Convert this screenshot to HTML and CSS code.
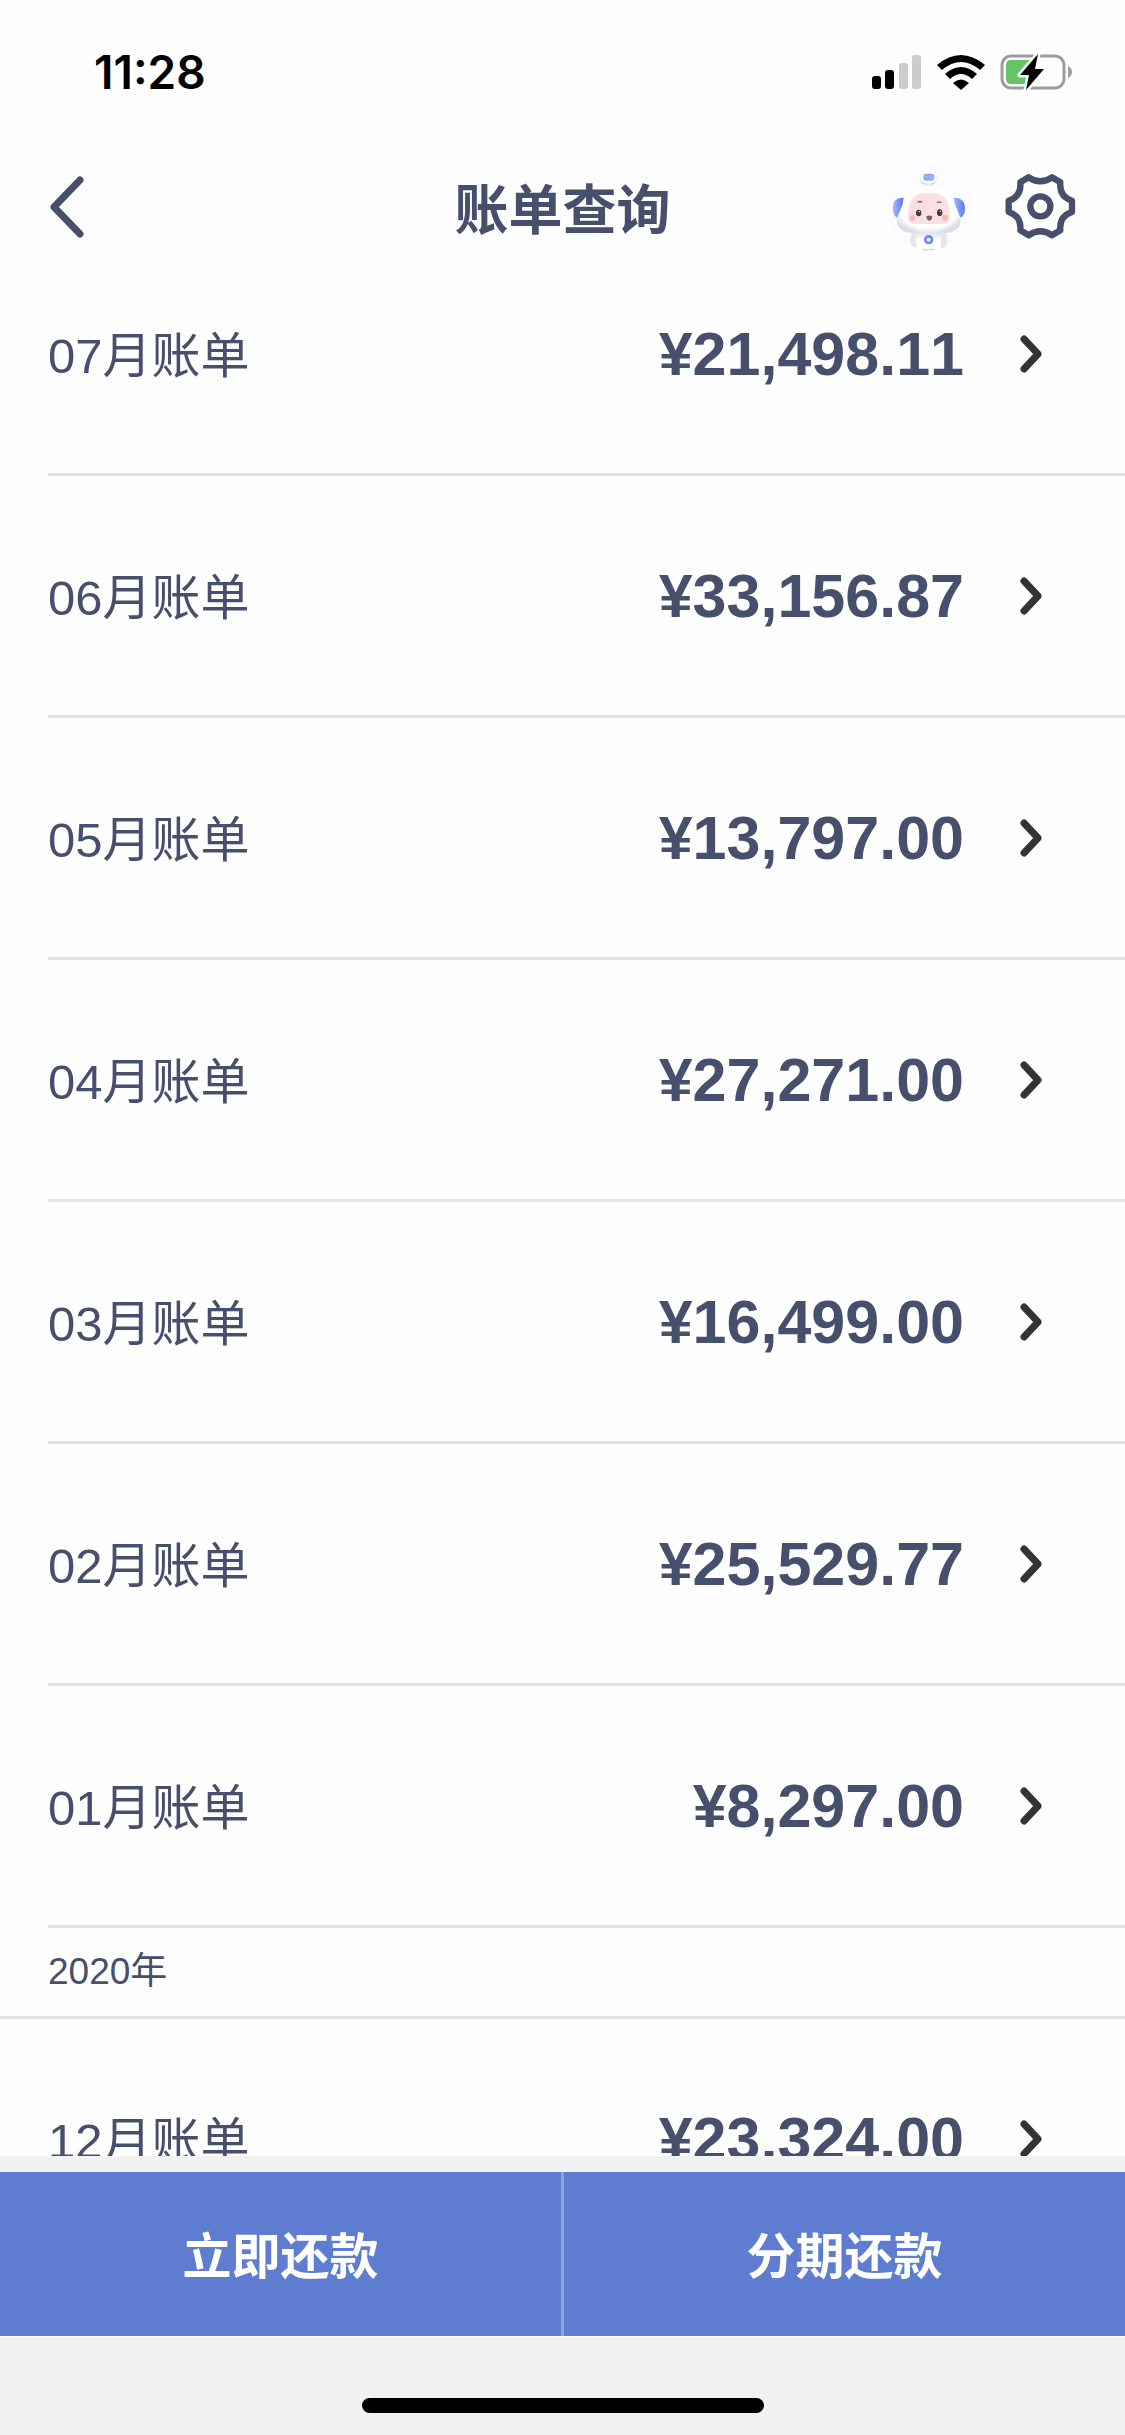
FILE: index.html
```
<!DOCTYPE html>
<html lang="zh-CN">
<head>
    <meta charset="UTF-8">
    <meta name="viewport" content="width=device-width, initial-scale=1.0">
    <title>账单查询</title>
    <link rel="stylesheet" href="styles.css">
</head>
<body>
    <!-- shared row arrow -->
    <svg class="sprite" aria-hidden="true">
        <symbol id="arrow" viewBox="0 0 22 38">
            <path d="M4 4 L18 19 L4 34" fill="none" stroke="#333" stroke-width="7" stroke-linecap="round" stroke-linejoin="round"/>
        </symbol>
    </svg>

    <header class="header">
        <div class="status-bar">
            <span class="time">11:28</span>
            <div class="status-icons">
                <svg width="50" height="34" viewBox="0 0 50 34" aria-hidden="true">
                    <rect x="0" y="21" width="9" height="13" rx="3"/>
                    <rect x="13" y="15" width="9" height="19" rx="3"/>
                    <rect x="27" y="8" width="9" height="26" rx="3" fill="#ccc"/>
                    <rect x="40" y="0" width="9" height="34" rx="3" fill="#ccc"/>
                </svg>
                <svg width="48" height="35" viewBox="0 0 48 35" aria-hidden="true">
                    <path d="M0 10 Q24 -10 48 10 L43 15 Q24 -1 5 15 Z"/>
                    <path d="M8 19 Q24 5 40 19 L35 24 Q24 14 13 24 Z"/>
                    <path d="M16 28 Q24 21 32 28 L24 35 Z"/>
                </svg>
                <svg width="73" height="36" viewBox="0 0 73 36" aria-hidden="true">
                    <rect x="2" y="2" width="62" height="32" rx="9" fill="none" stroke="#9d9d9d" stroke-width="3"/>
                    <path d="M68 12 Q72 14 72 18 Q72 22 68 24 Z" fill="#9d9d9d"/>
                    <path d="M11 6 H29 V30 H11 Q6 30 6 25 V11 Q6 6 11 6 Z" fill="#65c466"/>
                    <path d="M38 0 L20 21 H29 L26 36 L44 15 H35 Z" stroke="#fff" stroke-width="5" stroke-linejoin="round"/>
                    <path d="M38 0 L20 21 H29 L26 36 L44 15 H35 Z"/>
                </svg>
            </div>
        </div>
        <div class="nav-bar">
            <div class="nav-side">
                <button class="icon-button" type="button" aria-label="返回">
                    <svg width="36" height="64" viewBox="0 0 36 64" aria-hidden="true">
                        <path d="M32 5 L6 32 L32 59" fill="none" stroke="#464f6b" stroke-width="7" stroke-linecap="round" stroke-linejoin="round"/>
                    </svg>
                </button>
            </div>
            <h1 class="nav-title">账单查询</h1>
            <div class="nav-side nav-right">
                <button class="icon-button" type="button" aria-label="客服">
                    <svg width="90" height="90" viewBox="69 46 270 270" aria-hidden="true">
                        <defs>
                            <radialGradient id="head" cx="50%" cy="42%" r="60%">
                                <stop offset="80%" stop-color="#fff"/>
                                <stop offset="100%" stop-color="#dcdde3"/>
                            </radialGradient>
                            <linearGradient id="ear" x1="0" y1="0" x2="1" y2="0">
                                <stop offset="0%" stop-color="#a3b9fb"/>
                                <stop offset="100%" stop-color="#5279f4"/>
                            </linearGradient>
                            <linearGradient id="neck" x1="0" y1="0" x2="0" y2="1">
                                <stop offset="0%" stop-color="#dfe0e6"/>
                                <stop offset="45%" stop-color="#fff"/>
                            </linearGradient>
                        </defs>
                        <circle cx="206" cy="177" r="130" fill="#fafcff"/>
                        <!-- body and arms -->
                        <path d="M154 260 Q144 290 160 302 L170 304 L172 260 Z" fill="#e5e6ec"/>
                        <path d="M258 260 Q268 290 254 302 L243 304 L240 260 Z" fill="#e5e6ec"/>
                        <path d="M169 256 H242 Q246 284 240 310 H172 Q166 284 169 256 Z" fill="url(#neck)"/>
                        <path d="M188 309 H224" stroke="#d5d5da" stroke-width="4"/>
                        <circle cx="206" cy="279" r="10" fill="#edf2ff" stroke="#668af5" stroke-width="8"/>
                        <!-- antenna -->
                        <ellipse cx="205" cy="94" rx="26" ry="23" fill="#d9dae1"/>
                        <ellipse cx="205" cy="90" rx="25" ry="22" fill="#fff"/>
                        <rect x="190" y="81" width="33" height="21" rx="8" fill="#8eabf8"/>
                        <path d="M197 87 L202 95 M211 87 L216 95" stroke="#b9cbfc" stroke-width="3"/>
                        <path d="M199 110 H212 V122 H199 Z" fill="#f0f0f4"/>
                        <!-- ears -->
                        <path d="M131 153 Q97 151 99 188 Q100 208 111 213 Q126 192 131 153 Z" fill="url(#ear)"/>
                        <path d="M281 153 Q315 151 315 188 Q314 207 302 213 Q287 192 281 153 Z" fill="url(#ear)"/>
                        <!-- head -->
                        <path d="M206 118 C164 118 142 141 132 168 C123 185 111 209 111 223 Q111 256 157 259 H257 Q301 255 301 223 C301 207 289 181 280 165 C267 140 247 118 206 118 Z" fill="url(#head)"/>
                        <path d="M206 139 C166 139 152 151 146 184 L144 205 Q142 231 165 232 H247 Q271 231 269 205 L267 184 C261 151 247 139 206 139 Z" fill="#fbe0e3"/>
                        <circle cx="157" cy="214" r="9" fill="#f9b8bd"/>
                        <circle cx="255" cy="213" r="9" fill="#f9b8bd"/>
                        <ellipse cx="176" cy="199" rx="8" ry="10" fill="#463a3e"/>
                        <ellipse cx="239" cy="198" rx="8" ry="10" fill="#463a3e"/>
                        <circle cx="178" cy="195" r="2" fill="#fff"/>
                        <circle cx="241" cy="194" r="2" fill="#fff"/>
                        <path d="M173 167 Q180 162 187 167 M231 168 Q238 163 244 168" fill="none" stroke="#776266" stroke-width="4"/>
                        <path d="M199 209 Q208 204 217 209 Q216 222 208 222 Q200 222 199 209 Z" fill="#796367"/>
                    </svg>
                </button>
                <button class="icon-button" type="button" aria-label="设置">
                    <svg width="72" height="68" viewBox="434 67 216 204" aria-hidden="true">
                        <g fill="none" stroke="#464f6b" stroke-width="19" stroke-linejoin="round">
                            <path d="M505 80 Q540 104 575 80 L600 95 Q596 138 635 150 V184 Q596 196 600 239 L575 254 Q540 230 505 254 L480 239 Q484 196 445 184 V150 Q484 138 480 95 Z"/>
                            <circle cx="540" cy="167" r="30"/>
                        </g>
                    </svg>
                </button>
            </div>
        </div>
    </header>

    <main class="content">
        <ul class="bill-list">
            <li><a class="bill" href="#"><span class="month">07月账单</span><span class="amount">¥21,498.11</span><svg class="arrow"><use href="#arrow"/></svg></a></li>
            <li><a class="bill" href="#"><span class="month">06月账单</span><span class="amount">¥33,156.87</span><svg class="arrow"><use href="#arrow"/></svg></a></li>
            <li><a class="bill" href="#"><span class="month">05月账单</span><span class="amount">¥13,797.00</span><svg class="arrow"><use href="#arrow"/></svg></a></li>
            <li><a class="bill" href="#"><span class="month">04月账单</span><span class="amount">¥27,271.00</span><svg class="arrow"><use href="#arrow"/></svg></a></li>
            <li><a class="bill" href="#"><span class="month">03月账单</span><span class="amount">¥16,499.00</span><svg class="arrow"><use href="#arrow"/></svg></a></li>
            <li><a class="bill" href="#"><span class="month">02月账单</span><span class="amount">¥25,529.77</span><svg class="arrow"><use href="#arrow"/></svg></a></li>
            <li><a class="bill" href="#"><span class="month">01月账单</span><span class="amount">¥8,297.00</span><svg class="arrow"><use href="#arrow"/></svg></a></li>
        </ul>
        <h2 class="year">2020年</h2>
        <ul class="bill-list">
            <li><a class="bill" href="#"><span class="month">12月账单</span><span class="amount">¥23,324.00</span><svg class="arrow"><use href="#arrow"/></svg></a></li>
        </ul>
    </main>

    <footer class="footer">
        <div class="actions">
            <button class="action" type="button">立即还款</button>
            <button class="action" type="button">分期还款</button>
        </div>
        <div class="home-area">
            <div class="home-indicator"></div>
        </div>
    </footer>
</body>
</html>
```
FILE: styles.css
```
* {
    box-sizing: border-box;
}

body {
    margin: 0;
    height: 100vh;
    display: flex;
    flex-direction: column;
    overflow: hidden;
    background-color: #fefefe;
    color: #464f6b;
    font-family: "Liberation Sans", "Noto Sans CJK SC", sans-serif;
    font-size: 49px;
}

button {
    padding: 0;
    border: none;
    background: none;
    font: inherit;
    color: inherit;
    cursor: pointer;
}

svg {
    display: block;
}

.sprite {
    position: absolute;
    width: 0;
    height: 0;
}

/* Header */
.header {
    flex: none;
}

.status-bar {
    display: flex;
    justify-content: space-between;
    align-items: center;
    height: 144px;
    padding: 0 52px 0 94px;
    color: #000;
}

.time {
    font-family: Inter, sans-serif;
    font-size: 46px;
    font-weight: 600;
}

.status-icons {
    display: flex;
    align-items: center;
    gap: 15px;
}

.nav-bar {
    display: flex;
    align-items: center;
    height: 126px;
    padding: 0 48px;
}

.nav-side {
    flex: 1;
    display: flex;
    align-items: center;
}

.nav-right {
    justify-content: flex-end;
    gap: 32px;
}

.nav-title {
    margin: 0;
    padding-top: 8px;
    font-size: 54px;
    font-weight: 700;
    line-height: 80px;
}

/* Bills, scrolled a little way under the header */
.content {
    flex: 1;
    min-height: 0;
    margin-top: -36px;
    overflow: hidden;
}

.bill-list {
    margin: 0;
    padding: 0 0 0 48px;
    list-style: none;
}

.bill {
    display: flex;
    align-items: center;
    height: 242px;
    padding-right: 83px;
    border-bottom: 3px solid #e3e3e3;
    color: inherit;
    text-decoration: none;
}

.month {
    padding-bottom: 4px;
}

.amount {
    margin-left: auto;
    font-size: 61px;
    font-weight: 700;
    font-kerning: none;
}

.arrow {
    width: 22px;
    height: 38px;
    margin-left: 56px;
}

.year {
    margin: 0;
    padding: 0 48px;
    border-bottom: 3px solid #e3e3e3;
    font-size: 37px;
    font-weight: 400;
    line-height: 88px;
}

/* Footer */
.footer {
    flex: none;
    padding-top: 16px;
    background-color: #f1f1f1;
}

.actions {
    display: flex;
    border-bottom: 1px solid #fff;
    background-color: #5f7dd0;
    color: #fff;
}

.action {
    flex: 1;
    height: 164px;
    padding-bottom: 4px;
    font-weight: 700;
}

.action + .action {
    border-left: 3px solid #8fa4de;
}

.home-area {
    display: flex;
    justify-content: center;
    align-items: flex-end;
    height: 98px;
    padding-bottom: 22px;
}

.home-indicator {
    width: 402px;
    height: 15px;
    border-radius: 8px;
    background-color: #000;
}
```
